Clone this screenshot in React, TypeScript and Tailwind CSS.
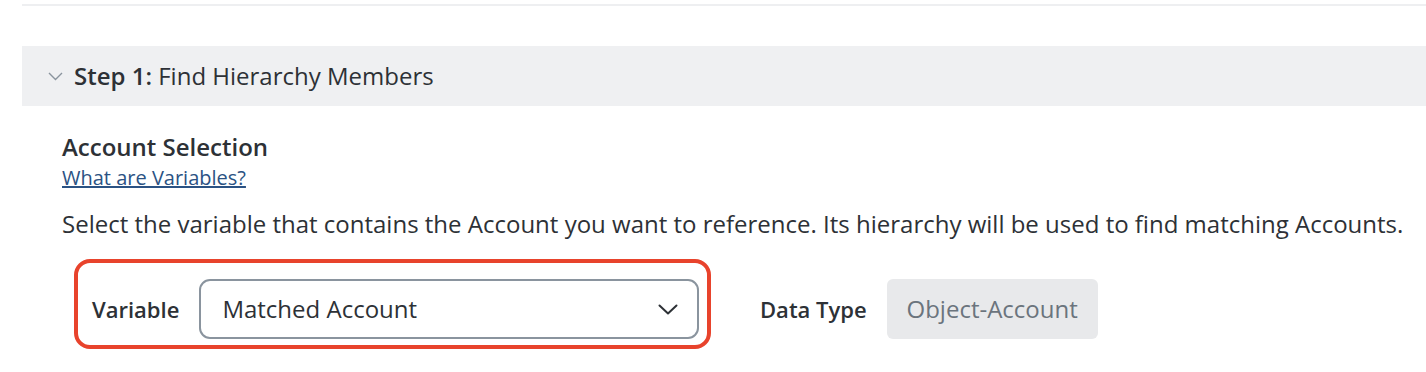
const FONT = { fontFamily: '"Open Sans", "Noto Sans", sans-serif' }

export default function App() {
  return (
    <div className="w-[1426px] h-[372px] bg-white overflow-hidden text-[#2d3136]" style={FONT}>
      {/* top divider */}
      <div className="ml-[22px] mt-[4px] h-[2px] bg-[#eeeff1]" />

      {/* step header */}
      <div className="ml-[22px] mt-[40px] h-[60px] bg-[#eff0f2] flex items-center pl-[26px]">
        <svg width="15" height="9" viewBox="0 0 15 9" className="mr-[11px] mt-[1px]">
          <path d="M1 1l6.5 6.5L14 1" fill="none" stroke="#8a949e" strokeWidth="1.4" />
        </svg>
        <span className="text-[24px] leading-none">
          <span className="font-semibold">Step 1:</span> Find Hierarchy Members
        </span>
      </div>

      {/* body */}
      <div className="pl-[62px] pt-[25px]">
        <h2 className="text-[24px] font-semibold leading-[32px]">Account Selection</h2>
        <a href="#" className="block text-[20px] leading-[28px] text-[#2b5283] underline mt-[1px] w-fit">
          What are Variables?
        </a>
        <p className="text-[24px] leading-[32px] mt-[16px]">
          Select the variable that contains the Account you want to reference. Its hierarchy will be used to find matching Accounts.
        </p>

        <div className="flex items-start mt-[19px] ml-[12px]">
          {/* highlighted variable picker */}
          <div className="flex items-center h-[90px] w-[637px] border-[4px] border-[#e8432c] rounded-[16px] pt-[10px] pl-[14px] pr-[8px]">
            <label className="text-[22px] font-semibold mr-[20px]">Variable</label>
            <button
              type="button"
              className="flex-1 h-[60px] flex items-center justify-between border-2 border-[#8a949e] rounded-[11px] pl-[21px] pr-[19px] text-[24px]"
            >
              Matched Account
              <svg width="20" height="11" viewBox="0 0 20 11" className="mt-[1px]">
                <path d="M1.5 1.5l8.5 8 8.5-8" fill="none" stroke="#2d3136" strokeWidth="2" strokeLinecap="round" strokeLinejoin="round" />
              </svg>
            </button>
          </div>

          <div className="mt-[20px] h-[60px] flex items-center">
            <span className="ml-[49px] text-[22px] font-semibold">Data Type</span>
            <div className="ml-[20px] h-[60px] w-[211px] bg-[#e8e9eb] rounded-[6px] flex items-center justify-center text-[24px] text-[#6b747d]">
              Object-Account
            </div>
          </div>
        </div>
      </div>
    </div>
  )
}
